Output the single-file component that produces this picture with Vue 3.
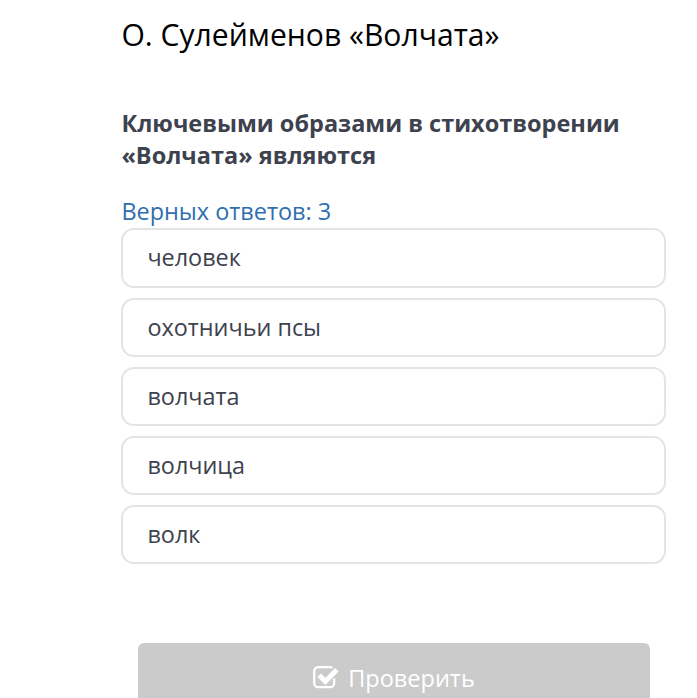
<template>
  <main class="quiz">
    <h1 class="title">О. Сулейменов «Волчата»</h1>
    <h2 class="question">Ключевыми образами в стихотворении «Волчата» являются</h2>
    <div class="hint">Верных ответов: {{ correctCount }}</div>
    <ul class="answers">
      <li
        v-for="(answer, index) in answers"
        :key="answer"
        :class="['answer', { active: selected.includes(index) }]"
        @click="toggle(index)"
      >{{ answer }}</li>
    </ul>
    <button class="check" type="button">
      <svg class="icon" viewBox="0 0 26 24">
        <path d="M21.2 13.5v4.7a4 4 0 0 1-4 4H5.2a4 4 0 0 1-4-4v-12a4 4 0 0 1 4-4h12q1.2 0 2.2.5" />
        <path class="tick" d="M6.2 10.2l6.2 6.2L23.8 4.8" />
      </svg>
      <span>Проверить</span>
    </button>
  </main>
</template>

<script setup>
import { ref } from 'vue'

const correctCount = 3
const answers = ['человек', 'охотничьи псы', 'волчата', 'волчица', 'волк']
const selected = ref([])

function toggle(index) {
  if (selected.value.includes(index)) {
    selected.value = selected.value.filter(i => i !== index)
  } else if (selected.value.length < correctCount) {
    selected.value.push(index)
  }
}
</script>

<style>
body {
  background: #fff;
  overflow: hidden;
}
</style>

<style scoped>
.quiz {
  box-sizing: border-box;
  height: 698px;
  padding: 13px 31px 0 121.4px;
  overflow: hidden;
  font-family: 'Open Sans', 'Noto Sans', sans-serif;
  color: #3d424e;
}
.title {
  margin: 0;
  font-size: 30.1px;
  font-weight: 400;
  line-height: 44px;
  color: #000;
}
.question {
  margin: 50px 0 0;
  font-size: 23.5px;
  font-weight: 700;
  line-height: 32px;
}
.hint {
  margin-top: 24px;
  font-size: 23.45px;
  line-height: 32px;
  color: #2f6fb0;
}
.answers {
  display: flex;
  flex-direction: column;
  gap: 10px;
  margin: 1.4px 0 0;
  padding: 0;
  list-style: none;
}
.answer {
  box-sizing: border-box;
  height: 59.2px;
  padding: 0 24px;
  border: 2px solid #e4e4e4;
  border-radius: 13px;
  font-size: 23.4px;
  line-height: 54.4px;
  cursor: pointer;
}
.answer.active {
  border-color: #2a6aad;
}
.check {
  display: flex;
  align-items: center;
  justify-content: center;
  gap: 9px;
  width: 512px;
  height: 70px;
  margin: 79px 0 0 16.6px;
  padding: 0;
  border: 0;
  border-radius: 6px;
  background: #cbcbcb;
  color: #fff;
  font: inherit;
  font-size: 23.5px;
}
.icon {
  width: 26px;
  height: 24px;
  margin-top: -3px;
  fill: none;
  stroke: currentColor;
  stroke-width: 2.3;
}
.icon .tick {
  stroke-width: 5;
}
</style>
